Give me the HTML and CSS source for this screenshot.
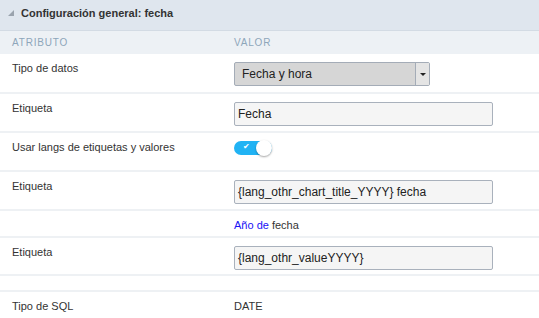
FILE: index.html
```html
<!DOCTYPE html>
<html lang="es">

<head>
    <meta charset="UTF-8">
    <meta name="viewport" content="width=device-width, initial-scale=1.0">
    <title>Configuración general: fecha</title>
    <link rel="stylesheet" href="styles.css">
</head>

<body>
    <div class="panel">
        <div class="panel-title">
            <span class="caret"></span>
            Configuración general: fecha
        </div>

        <div class="row row-head">
            <div class="label">Atributo</div>
            <div class="value">Valor</div>
        </div>

        <div class="row row-select">
            <div class="label">Tipo de datos</div>
            <div class="value">
                <div class="select">
                    <span>Fecha y hora</span>
                    <span class="select-btn"></span>
                </div>
            </div>
        </div>

        <div class="row">
            <div class="label">Etiqueta</div>
            <div class="value"><div class="input">Fecha</div></div>
        </div>

        <div class="row">
            <div class="label">Usar langs de etiquetas y valores</div>
            <div class="value">
                <div class="toggle">
                    <span class="check">&#10004;</span>
                    <span class="knob"></span>
                </div>
            </div>
        </div>

        <div class="row">
            <div class="label">Etiqueta</div>
            <div class="value"><div class="input">{lang_othr_chart_title_YYYY} fecha</div></div>
        </div>

        <div class="row row-text">
            <div class="label"></div>
            <div class="value text"><span class="lang">Año de</span> fecha</div>
        </div>

        <div class="row row-short">
            <div class="label">Etiqueta</div>
            <div class="value"><div class="input">{lang_othr_valueYYYY}</div></div>
        </div>

        <div class="row row-empty"></div>

        <div class="row row-last">
            <div class="label">Tipo de SQL</div>
            <div class="value text">DATE</div>
        </div>
    </div>
</body>

</html>
```

FILE: styles.css
```css
body {
    margin: 0;
    font-family: "Liberation Sans", Arial, sans-serif;
    font-size: 11px;
    color: #333;
    background-color: #fff
}

.panel {
    width: 539px
}

.panel-title {
    display: flex;
    align-items: center;
    height: 31px;
    box-sizing: border-box;
    padding: 0 0 5px 8px;
    background-color: #dfe6ee;
    border-bottom: 1px solid #d3dbe4;
    font-weight: bold;
    color: #333
}

.caret {
    width: 0;
    height: 0;
    margin-right: 7px;
    border-left: 6px solid transparent;
    border-bottom: 6px solid #9aa3ad
}

.row {
    display: grid;
    grid-template-columns: 234px 1fr;
    height: 39px;
    box-sizing: border-box;
    padding-top: 7px;
    border-bottom: 2px solid #eef1f4
}

.row .label {
    padding-left: 12px;
    line-height: 14px
}

.row .value.text {
    line-height: 14px
}

.row-head {
    height: 23px;
    padding-top: 0;
    align-items: center;
    background-color: #edf1f5;
    border-bottom: none;
    font-size: 10px;
    letter-spacing: .8px;
    text-transform: uppercase;
    color: #8ea6ba
}

.row-select {
    height: 40px
}

.row-text {
    height: 27px
}

.row-short {
    height: 38px
}

.row-empty {
    height: 16px
}

.row-last {
    border-bottom: none;
    height: 26px
}

.select {
    display: flex;
    align-items: center;
    justify-content: space-between;
    width: 196px;
    height: 24px;
    margin-top: 1px;
    box-sizing: border-box;
    padding-left: 7px;
    background-color: #d6d6d6;
    border: 1px solid #a4acb7;
    border-radius: 2px;
    font-size: 12px;
    color: #222
}

.select-btn {
    position: relative;
    width: 13px;
    height: 22px;
    background-color: #e4e4e4;
    border-left: 1px solid #a4acb7
}

.select-btn::after {
    content: "";
    position: absolute;
    left: 4px;
    top: 10px;
    border-left: 3px solid transparent;
    border-right: 3px solid transparent;
    border-top: 3px solid #222
}

.input {
    width: 259px;
    height: 24px;
    margin-top: 1px;
    box-sizing: border-box;
    padding-left: 3px;
    line-height: 22px;
    background-color: #f5f5f5;
    border: 1px solid #a9b1bc;
    border-radius: 2px;
    font-size: 12px;
    color: #222
}

.toggle {
    position: relative;
    width: 38px;
    height: 14px;
    margin-top: 1px;
    background-color: #21b3f4;
    border-radius: 7px
}

.check {
    position: absolute;
    left: 9px;
    top: 0;
    font-size: 8px;
    line-height: 12px;
    color: #fff
}

.knob {
    position: absolute;
    right: 0;
    top: -1px;
    width: 16px;
    height: 16px;
    box-sizing: border-box;
    background-color: #fff;
    border-radius: 50%;
    box-shadow: 0 1px 2px rgba(0, 0, 0, .35)
}

.lang {
    color: #1a12f5
}
```
